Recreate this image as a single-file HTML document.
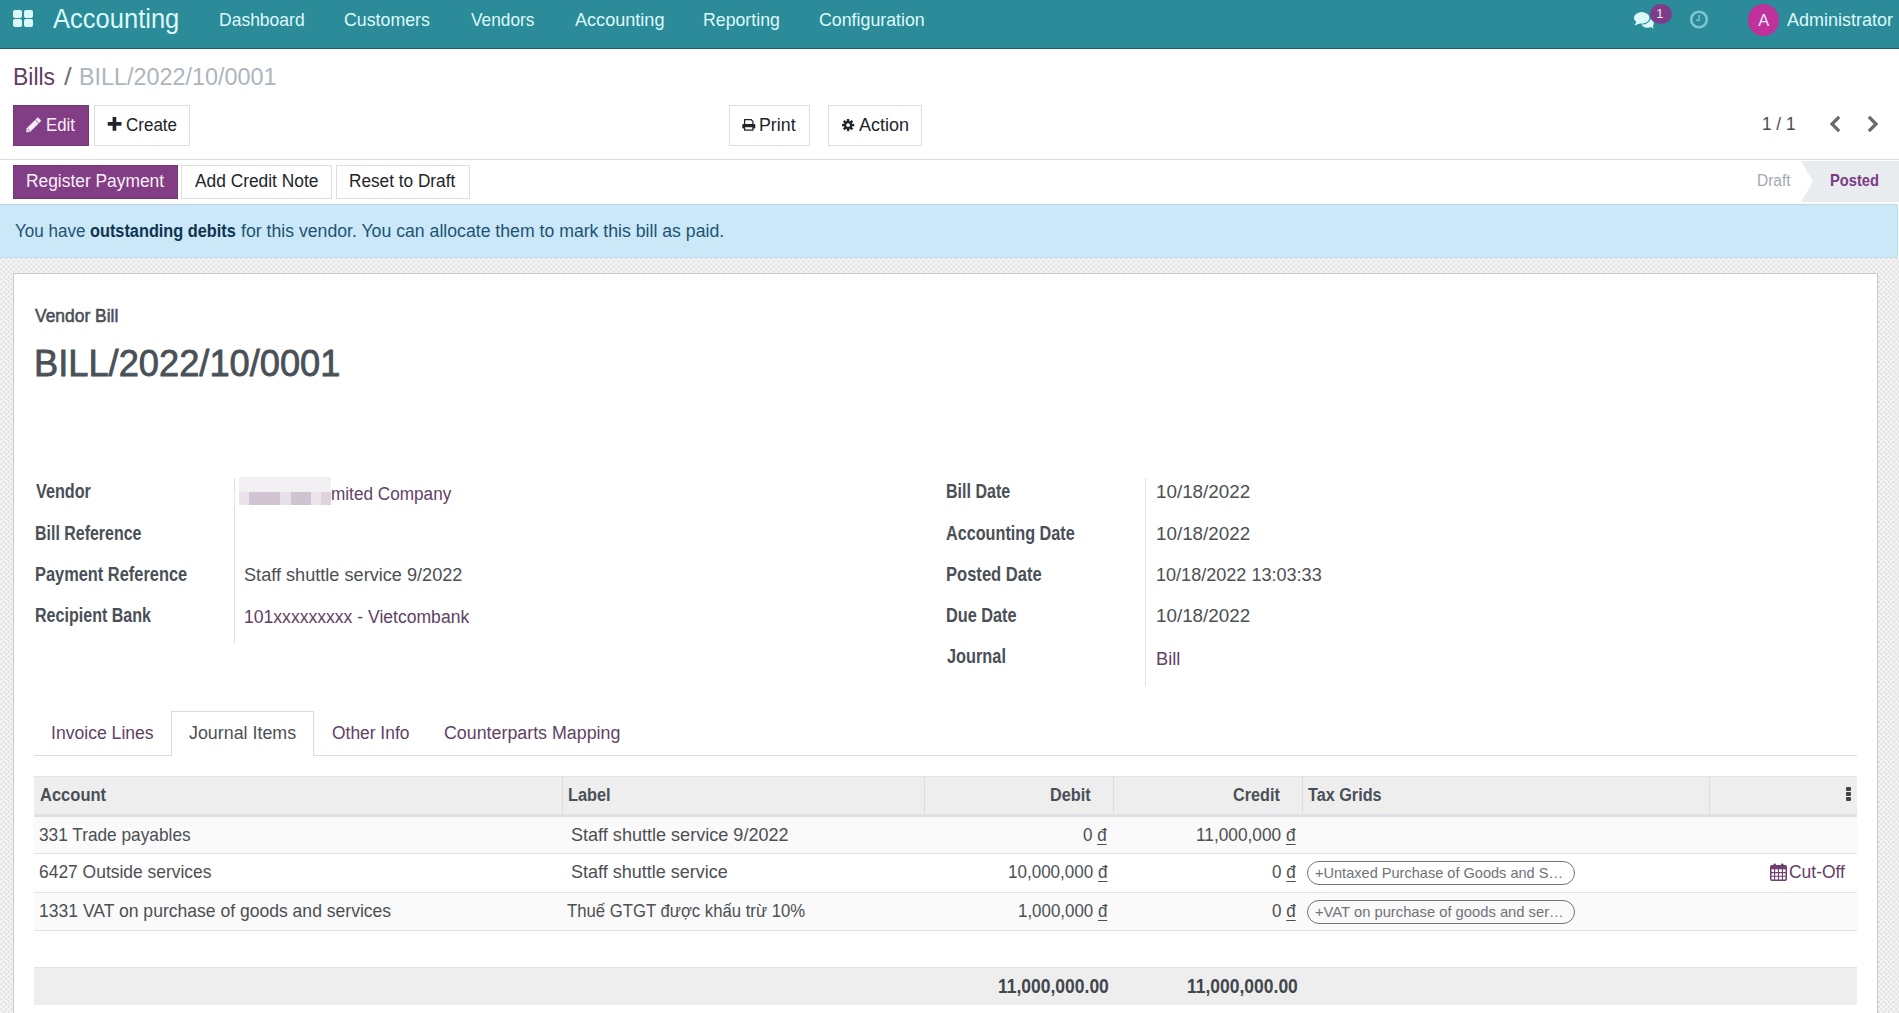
<!DOCTYPE html>
<html><head><meta charset="utf-8"><title>Bills / BILL/2022/10/0001</title>
<style>
html,body{margin:0;padding:0;}
body{width:1899px;height:1013px;overflow:hidden;position:relative;background:#fff;font-family:"Liberation Sans",sans-serif;}
.t{position:absolute;white-space:nowrap;line-height:1;transform-origin:0 0;}
.a{position:absolute;box-sizing:border-box;}
.btn{position:absolute;box-sizing:border-box;border:1px solid #dedede;background:#fff;}
.pbtn{position:absolute;box-sizing:border-box;background:#813e84;border:1px solid #74377a;}
.bg{background-color:#f3f3f3;background-image:radial-gradient(circle at 1.25px 1.25px,#dedede 0.6px,rgba(222,222,222,0) 1.5px),radial-gradient(circle at 3.75px 3.75px,#dedede 0.6px,rgba(222,222,222,0) 1.5px);background-size:5px 5px;}
svg{position:absolute;overflow:visible;}
.dong{text-decoration:underline;text-decoration-thickness:1px;text-underline-offset:3px}
</style></head><body>
<!-- navbar -->
<div class="a" style="left:0;top:0;width:1899px;height:48px;background:#2c8b99"></div>
<div class="a" style="left:0;top:48px;width:1899px;height:1px;background:#1f5e68"></div>
<!-- app grid icon -->
<div class="a" style="left:13px;top:10px;width:9px;height:8px;background:#dcf9f9;border-radius:2px"></div>
<div class="a" style="left:24px;top:10px;width:9px;height:8px;background:#dcf9f9;border-radius:2px"></div>
<div class="a" style="left:13px;top:19px;width:9px;height:8px;background:#dcf9f9;border-radius:2px"></div>
<div class="a" style="left:24px;top:19px;width:9px;height:8px;background:#dcf9f9;border-radius:2px"></div>
<!-- chat icon -->
<svg style="left:1628px;top:0px" width="30" height="32" viewBox="0 0 30 32">
  <ellipse cx="19.6" cy="23.4" rx="6.2" ry="4.3" fill="#dcf9f9"/>
  <path d="M21.5 25.5 L25.4 28.9 L24.6 23.6 Z" fill="#dcf9f9"/>
  <ellipse cx="13.75" cy="17.9" rx="8.1" ry="6.1" fill="#dcf9f9" stroke="#2c8b99" stroke-width="1.1"/>
  <ellipse cx="13.75" cy="17.9" rx="7.6" ry="5.6" fill="#dcf9f9"/>
  <path d="M8.5 21.5 L6.6 25.6 L12.5 23.2 Z" fill="#dcf9f9"/>
</svg>
<!-- badge -->
<div class="a" style="left:1650px;top:3.5px;width:21.5px;height:20.5px;border-radius:50%;background:#7e3b8a"></div>
<div class="t" style="left:1656.3px;top:8px;font-size:12.8px;color:#f8ecf8">1</div>
<!-- clock -->
<svg style="left:1689px;top:10px" width="20" height="19" viewBox="0 0 20 19">
  <circle cx="10" cy="9.5" r="7.8" fill="none" stroke="#7cc7cf" stroke-width="2.6"/>
  <path d="M10.2 5 V10.3 H7" fill="none" stroke="#79c3cc" stroke-width="1.4"/>
</svg>
<!-- avatar -->
<div class="a" style="left:1747.6px;top:4.2px;width:31.5px;height:31.5px;border-radius:50%;background:#bf319b"></div>
<div class="t" style="left:1758.3px;top:12px;font-size:16.5px;color:#fbe6f6">A</div>

<!-- control panel line -->
<div class="a" style="left:0;top:159px;width:1899px;height:1px;background:#dcdcdc"></div>
<!-- buttons -->
<div class="pbtn" style="left:13px;top:105px;width:76px;height:41px"></div>
<div class="btn" style="left:94px;top:105px;width:96px;height:41px"></div>
<div class="btn" style="left:729px;top:105px;width:81px;height:41px"></div>
<div class="btn" style="left:828px;top:105px;width:94px;height:41px"></div>
<div class="pbtn" style="left:13px;top:165px;width:165px;height:34px"></div>
<div class="btn" style="left:181px;top:165px;width:151px;height:34px"></div>
<div class="btn" style="left:336px;top:165px;width:134px;height:34px"></div>
<!-- pencil -->
<svg style="left:22px;top:112px" width="24" height="24" viewBox="0 0 24 24">
  <path d="M4.4 20.1 L4.99 16.25 L15.87 5.47 L19.13 8.73 L8.25 19.5 Z" fill="#fbeffa" stroke="#fbeffa" stroke-width="0.4" stroke-linejoin="round"/>
  <path d="M13.4 7.94 L16.66 11.2" stroke="#6e3a73" stroke-width="0.9"/>
  <path d="M6.1 17.1 L7.4 18.6" stroke="#6e3a73" stroke-width="1"/>
</svg>
<!-- plus -->
<svg style="left:107px;top:117px" width="15" height="15" viewBox="0 0 15 15">
  <rect x="5.6" y="0" width="3.7" height="13.8" rx="0.6" fill="#212529"/>
  <rect x="0.7" y="5.0" width="13.8" height="3.7" rx="0.6" fill="#212529"/>
</svg>
<!-- printer -->
<svg style="left:742px;top:119px" width="14" height="13" viewBox="0 0 14 13">
  <path d="M2.6 5.2 V0.7 H9.2 L10.9 2.4 V5.2" fill="none" stroke="#212529" stroke-width="1.25"/>
  <rect x="0.3" y="5.1" width="13" height="4.5" rx="0.8" fill="#212529"/>
  <path d="M2.6 8.2 V11.0 H10.9 V8.2" fill="#fff" stroke="#212529" stroke-width="1.25"/>
</svg>
<!-- gear -->
<svg style="left:841.6px;top:118.9px" width="12.2" height="12.2" viewBox="0 0 14 14">
  <g fill="#212529">
    <circle cx="7" cy="7" r="4.6"/>
    <rect x="5.6" y="0" width="2.8" height="14"/>
    <rect x="0" y="5.6" width="14" height="2.8"/>
    <rect x="5.6" y="0" width="2.8" height="14" transform="rotate(45 7 7)"/>
    <rect x="5.6" y="0" width="2.8" height="14" transform="rotate(-45 7 7)"/>
  </g>
  <circle cx="7" cy="7" r="2.2" fill="#fff"/>
</svg>
<!-- pager chevrons -->
<svg style="left:1829.3px;top:116px" width="12" height="16" viewBox="0 0 12 16">
  <path d="M9 2 L3 8 L9 14" fill="none" stroke="#6a6a6a" stroke-width="3.2" stroke-linecap="square"/>
</svg>
<svg style="left:1867px;top:116px" width="12" height="16" viewBox="0 0 12 16">
  <path d="M3 2 L9 8 L3 14" fill="none" stroke="#6a6a6a" stroke-width="3.2" stroke-linecap="square"/>
</svg>
<!-- statusbar arrow -->
<svg style="left:1800px;top:161px" width="99" height="41" viewBox="0 0 99 41">
  <path d="M1 0 H99 V41 H1 L13 20.5 Z" fill="#e9ecef"/>
</svg>

<!-- alert -->
<div class="a" style="left:0;top:204px;width:1899px;height:54px;background:#fbfdfe"></div>
<div class="a" style="left:0;top:204px;width:1898px;height:54px;background:#cae8f8;border-top:1px solid #bdd7e3;border-bottom:1px solid #bfdcea;border-right:1px solid #bfdcea"></div>
<!-- background -->
<div class="a bg" style="left:0;top:258px;width:1899px;height:755px"></div>
<!-- sheet -->
<div class="a" style="left:13px;top:273px;width:1865px;height:800px;background:#fff;border:1px solid #c9c9cc"></div>

<!-- field separators -->
<div class="a" style="left:234px;top:478px;width:1px;height:166px;background:#e2e2e2"></div>
<div class="a" style="left:1145px;top:478px;width:1px;height:208px;background:#e2e2e2"></div>
<!-- blurred vendor -->
<div class="a" style="left:239px;top:477px;width:92px;height:15px;background:#f3f0f3"></div>
<div class="a" style="left:239px;top:492px;width:10px;height:13px;background:#ece2ea"></div>
<div class="a" style="left:249px;top:492px;width:31px;height:13px;background:#d2c4d2"></div>
<div class="a" style="left:280px;top:492px;width:11px;height:13px;background:#e8e0e8"></div>
<div class="a" style="left:291px;top:492px;width:20px;height:13px;background:#d0c3d1"></div>
<div class="a" style="left:311px;top:492px;width:10px;height:13px;background:#ece5ec"></div>
<div class="a" style="left:321px;top:492px;width:10px;height:13px;background:#ddd2dd"></div>

<!-- tabs -->
<div class="a" style="left:34px;top:755px;width:1823px;height:1px;background:#dddddd"></div>
<div class="a" style="left:171px;top:711px;width:143px;height:45px;background:#fff;border:1px solid #dcdcdc;border-bottom:none"></div>

<!-- table -->
<div class="a" style="left:34px;top:776px;width:1823px;height:38px;background:#eeeeee;border-top:1px solid #e4e4e4"></div>
<div class="a" style="left:34px;top:814px;width:1823px;height:3px;background:#dee2e6"></div>
<div class="a" style="left:562px;top:777px;width:1px;height:37px;background:#dcdcdc"></div>
<div class="a" style="left:924px;top:777px;width:1px;height:37px;background:#dcdcdc"></div>
<div class="a" style="left:1113px;top:777px;width:1px;height:37px;background:#dcdcdc"></div>
<div class="a" style="left:1302px;top:777px;width:1px;height:37px;background:#dcdcdc"></div>
<div class="a" style="left:1709px;top:777px;width:1px;height:37px;background:#dcdcdc"></div>
<!-- dots -->
<div class="a" style="left:1846px;top:787px;width:5px;height:4px;background:#444;border-radius:1px"></div>
<div class="a" style="left:1846px;top:792px;width:5px;height:4px;background:#444;border-radius:1px"></div>
<div class="a" style="left:1846px;top:797px;width:5px;height:4px;background:#444;border-radius:1px"></div>
<!-- rows -->
<div class="a" style="left:34px;top:817px;width:1823px;height:36px;background:#fafafa"></div>
<div class="a" style="left:34px;top:853px;width:1823px;height:1px;background:#e2e2e2"></div>
<div class="a" style="left:34px;top:892px;width:1823px;height:1px;background:#e2e2e2"></div>
<div class="a" style="left:34px;top:893px;width:1823px;height:37px;background:#fafafa"></div>
<div class="a" style="left:34px;top:930px;width:1823px;height:1px;background:#e2e2e2"></div>
<!-- tags -->
<div class="a" style="left:1307px;top:861px;width:268px;height:24px;border:1.5px solid #70757a;border-radius:12px"></div>
<div class="a" style="left:1307px;top:900px;width:268px;height:24px;border:1.5px solid #70757a;border-radius:12px"></div>
<!-- calendar -->
<svg style="left:1770px;top:863px" width="17" height="18" viewBox="0 0 17 18">
  <rect x="0.75" y="2.75" width="15.5" height="14.5" rx="1.2" fill="none" stroke="#6f3f6d" stroke-width="1.5"/>
  <rect x="0.75" y="2.75" width="15.5" height="3.5" fill="#6f3f6d"/>
  <path d="M4.6 6 V17 M8.5 6 V17 M12.4 6 V17 M1 9.6 H16 M1 13.3 H16" stroke="#6f3f6d" stroke-width="1.1"/>
  <rect x="3.5" y="0.5" width="2.4" height="4" rx="1" fill="#6f3f6d"/>
  <rect x="11.1" y="0.5" width="2.4" height="4" rx="1" fill="#6f3f6d"/>
</svg>
<!-- footer -->
<div class="a" style="left:34px;top:967px;width:1823px;height:38px;background:#eeeeee;border-top:1px solid #e2e2e2"></div>

<div class="t" style="left:53.20px;top:6px;font-size:27px;font-weight:400;color:#dcf9f9;transform:scaleX(0.9455);">Accounting</div>
<div class="t" style="left:218.76px;top:11px;font-size:18.6px;font-weight:400;color:#dcf9f9;transform:scaleX(0.9416);">Dashboard</div>
<div class="t" style="left:344.24px;top:11px;font-size:18.6px;font-weight:400;color:#dcf9f9;transform:scaleX(0.9557);">Customers</div>
<div class="t" style="left:470.70px;top:11px;font-size:18.6px;font-weight:400;color:#dcf9f9;transform:scaleX(0.9309);">Vendors</div>
<div class="t" style="left:575.00px;top:11px;font-size:18.6px;font-weight:400;color:#dcf9f9;transform:scaleX(0.9725);">Accounting</div>
<div class="t" style="left:703.25px;top:11px;font-size:18.6px;font-weight:400;color:#dcf9f9;transform:scaleX(0.9532);">Reporting</div>
<div class="t" style="left:819.34px;top:11px;font-size:18.6px;font-weight:400;color:#dcf9f9;transform:scaleX(0.9560);">Configuration</div>
<div class="t" style="left:1786.90px;top:11px;font-size:18.6px;font-weight:400;color:#dcf9f9;transform:scaleX(0.9679);">Administrator</div>
<div class="t" style="left:12.80px;top:65px;font-size:24.2px;font-weight:400;color:#5f3d62;transform:scaleX(0.9476);">Bills</div>
<div class="t" style="left:64.00px;top:65px;font-size:24.2px;font-weight:400;color:#6c757d;transform:scaleX(1.1429);">/</div>
<div class="t" style="left:79.47px;top:65px;font-size:24.2px;font-weight:400;color:#adb5bd;transform:scaleX(0.9667);">BILL/2022/10/0001</div>
<div class="t" style="left:45.68px;top:116px;font-size:18.3px;font-weight:400;color:#fbeffa;transform:scaleX(0.9161);">Edit</div>
<div class="t" style="left:126.37px;top:116px;font-size:18.3px;font-weight:400;color:#212529;transform:scaleX(0.9302);">Create</div>
<div class="t" style="left:759.03px;top:116px;font-size:18.3px;font-weight:400;color:#212529;transform:scaleX(0.9730);">Print</div>
<div class="t" style="left:858.50px;top:116px;font-size:18.3px;font-weight:400;color:#212529;transform:scaleX(0.9840);">Action</div>
<div class="t" style="left:1761.62px;top:116px;font-size:17.6px;font-weight:400;color:#4c4c4c;transform:scaleX(0.9788);">1 / 1</div>
<div class="t" style="left:26.05px;top:172px;font-size:18.3px;font-weight:400;color:#fbeffa;transform:scaleX(0.9500);">Register Payment</div>
<div class="t" style="left:195.40px;top:172px;font-size:18.3px;font-weight:400;color:#212529;transform:scaleX(0.9485);">Add Credit Note</div>
<div class="t" style="left:349.36px;top:172px;font-size:18.3px;font-weight:400;color:#212529;transform:scaleX(0.9420);">Reset to Draft</div>
<div class="t" style="left:1756.55px;top:172px;font-size:16.3px;font-weight:400;color:#a3a8ae;transform:scaleX(0.9500);">Draft</div>
<div class="t" style="left:1829.90px;top:172px;font-size:16.3px;font-weight:700;color:#7a3a85;transform:scaleX(0.9019);">Posted</div>
<div class="t" style="left:14.77px;top:222px;font-size:18.3px;font-weight:400;color:#1d5373;transform:scaleX(0.9311);">You have</div>
<div class="t" style="left:90.21px;top:222px;font-size:18.3px;font-weight:700;color:#0f3450;transform:scaleX(0.8920);">outstanding debits</div>
<div class="t" style="left:241.00px;top:222px;font-size:18.3px;font-weight:400;color:#1d5373;transform:scaleX(0.9663);">for this vendor. You can allocate them to mark this bill as paid.</div>
<div class="t" style="left:35.40px;top:306px;font-size:19.2px;font-weight:400;color:#4a5057;transform:scaleX(0.9077);-webkit-text-stroke:0.6px #4a5057;">Vendor Bill</div>
<div class="t" style="left:34.35px;top:345px;font-size:37.2px;font-weight:400;color:#495057;transform:scaleX(0.9749);-webkit-text-stroke:0.8px #495057;">BILL/2022/10/0001</div>
<div class="t" style="left:36.00px;top:481px;font-size:20.4px;font-weight:700;color:#4a5057;transform:scaleX(0.7942);">Vendor</div>
<div class="t" style="left:35.22px;top:523px;font-size:20.4px;font-weight:700;color:#4a5057;transform:scaleX(0.7822);">Bill Reference</div>
<div class="t" style="left:35.20px;top:564px;font-size:20.4px;font-weight:700;color:#4a5057;transform:scaleX(0.8037);">Payment Reference</div>
<div class="t" style="left:35.21px;top:605px;font-size:20.4px;font-weight:700;color:#4a5057;transform:scaleX(0.7877);">Recipient Bank</div>
<div class="t" style="left:330.59px;top:485px;font-size:18.8px;font-weight:400;color:#5f4264;transform:scaleX(0.9145);">mited Company</div>
<div class="t" style="left:243.73px;top:566px;font-size:18.8px;font-weight:400;color:#4c4f53;transform:scaleX(0.9656);">Staff shuttle service 9/2022</div>
<div class="t" style="left:243.76px;top:608px;font-size:18.8px;font-weight:400;color:#5f4264;transform:scaleX(0.9354);">101xxxxxxxxx - Vietcombank</div>
<div class="t" style="left:946.31px;top:481px;font-size:20.4px;font-weight:700;color:#4a5057;transform:scaleX(0.7862);">Bill Date</div>
<div class="t" style="left:946.31px;top:523px;font-size:20.4px;font-weight:700;color:#4a5057;transform:scaleX(0.7944);">Accounting Date</div>
<div class="t" style="left:946.29px;top:564px;font-size:20.4px;font-weight:700;color:#4a5057;transform:scaleX(0.8121);">Posted Date</div>
<div class="t" style="left:946.30px;top:605px;font-size:20.4px;font-weight:700;color:#4a5057;transform:scaleX(0.7989);">Due Date</div>
<div class="t" style="left:947.10px;top:646px;font-size:20.4px;font-weight:700;color:#4a5057;transform:scaleX(0.8000);">Journal</div>
<div class="t" style="left:1155.60px;top:483px;font-size:18.8px;font-weight:400;color:#4c4f53;transform:scaleX(1.0011);">10/18/2022</div>
<div class="t" style="left:1155.60px;top:525px;font-size:18.8px;font-weight:400;color:#4c4f53;transform:scaleX(1.0011);">10/18/2022</div>
<div class="t" style="left:1155.64px;top:566px;font-size:18.8px;font-weight:400;color:#4c4f53;transform:scaleX(0.9614);">10/18/2022 13:03:33</div>
<div class="t" style="left:1155.60px;top:607px;font-size:18.8px;font-weight:400;color:#4c4f53;transform:scaleX(1.0011);">10/18/2022</div>
<div class="t" style="left:1155.63px;top:650px;font-size:18.8px;font-weight:400;color:#5f4264;transform:scaleX(0.9739);">Bill</div>
<div class="t" style="left:51.13px;top:724px;font-size:18.8px;font-weight:400;color:#5f4264;transform:scaleX(0.9364);">Invoice Lines</div>
<div class="t" style="left:189.30px;top:724px;font-size:18.8px;font-weight:400;color:#4c5156;transform:scaleX(0.9500);">Journal Items</div>
<div class="t" style="left:331.57px;top:724px;font-size:18.8px;font-weight:400;color:#5f4264;transform:scaleX(0.9268);">Other Info</div>
<div class="t" style="left:443.75px;top:724px;font-size:18.8px;font-weight:400;color:#5f4264;transform:scaleX(0.9489);">Counterparts Mapping</div>
<div class="t" style="left:40.13px;top:785px;font-size:19.1px;font-weight:700;color:#4a5057;transform:scaleX(0.8653);">Account</div>
<div class="t" style="left:568.15px;top:785px;font-size:19.1px;font-weight:700;color:#4a5057;transform:scaleX(0.8542);">Label</div>
<div class="t" style="left:1049.95px;top:785px;font-size:19.1px;font-weight:700;color:#4a5057;transform:scaleX(0.8511);">Debit</div>
<div class="t" style="left:1232.65px;top:785px;font-size:19.1px;font-weight:700;color:#4a5057;transform:scaleX(0.8481);">Credit</div>
<div class="t" style="left:1308.20px;top:785px;font-size:19.1px;font-weight:700;color:#4a5057;transform:scaleX(0.8488);">Tax Grids</div>
<div class="t" style="left:39.17px;top:826px;font-size:18.5px;font-weight:400;color:#4c4f53;transform:scaleX(0.9329);">331 Trade payables</div>
<div class="t" style="left:570.62px;top:826px;font-size:18.5px;font-weight:400;color:#4c4f53;transform:scaleX(0.9765);">Staff shuttle service 9/2022</div>
<div class="t" style="left:1083.48px;top:826px;font-size:18.5px;font-weight:400;color:#4c4f53;transform:scaleX(0.9200);">0 <span class="dong">&#273;</span></div>
<div class="t" style="left:1196.47px;top:826px;font-size:18.5px;font-weight:400;color:#4c4f53;transform:scaleX(0.9340);">11,000,000 <span class="dong">&#273;</span></div>
<div class="t" style="left:39.16px;top:863px;font-size:18.5px;font-weight:400;color:#4c4f53;transform:scaleX(0.9423);">6427 Outside services</div>
<div class="t" style="left:570.63px;top:863px;font-size:18.5px;font-weight:400;color:#4c4f53;transform:scaleX(0.9730);">Staff shuttle service</div>
<div class="t" style="left:1007.98px;top:863px;font-size:18.5px;font-weight:400;color:#4c4f53;transform:scaleX(0.9206);">10,000,000 <span class="dong">&#273;</span></div>
<div class="t" style="left:1272.48px;top:863px;font-size:18.5px;font-weight:400;color:#4c4f53;transform:scaleX(0.9200);">0 <span class="dong">&#273;</span></div>
<div class="t" style="left:1314.99px;top:866px;font-size:14.4px;font-weight:400;color:#6f7378;transform:scaleX(1.0116);">+Untaxed Purchase of Goods and S&#8230;</div>
<div class="t" style="left:1789.19px;top:862px;font-size:19.2px;font-weight:400;color:#623d66;transform:scaleX(0.9098);">Cut-Off</div>
<div class="t" style="left:39.15px;top:902px;font-size:18.5px;font-weight:400;color:#4c4f53;transform:scaleX(0.9484);">1331 VAT on purchase of goods and services</div>
<div class="t" style="left:567.40px;top:902px;font-size:18.5px;font-weight:400;color:#4c4f53;transform:scaleX(0.9027);">Thu&#7871; GTGT &#273;&#432;&#7907;c kh&#7845;u tr&#7915; 10%</div>
<div class="t" style="left:1017.89px;top:902px;font-size:18.5px;font-weight:400;color:#4c4f53;transform:scaleX(0.9134);">1,000,000 <span class="dong">&#273;</span></div>
<div class="t" style="left:1272.48px;top:902px;font-size:18.5px;font-weight:400;color:#4c4f53;transform:scaleX(0.9200);">0 <span class="dong">&#273;</span></div>
<div class="t" style="left:1314.97px;top:905px;font-size:14.4px;font-weight:400;color:#6f7378;transform:scaleX(1.0250);">+VAT on purchase of goods and ser&#8230;</div>
<div class="t" style="left:998.02px;top:977px;font-size:19.9px;font-weight:700;color:#42474d;transform:scaleX(0.8790);">11,000,000.00</div>
<div class="t" style="left:1186.62px;top:977px;font-size:19.9px;font-weight:700;color:#42474d;transform:scaleX(0.8790);">11,000,000.00</div>
</body></html>
